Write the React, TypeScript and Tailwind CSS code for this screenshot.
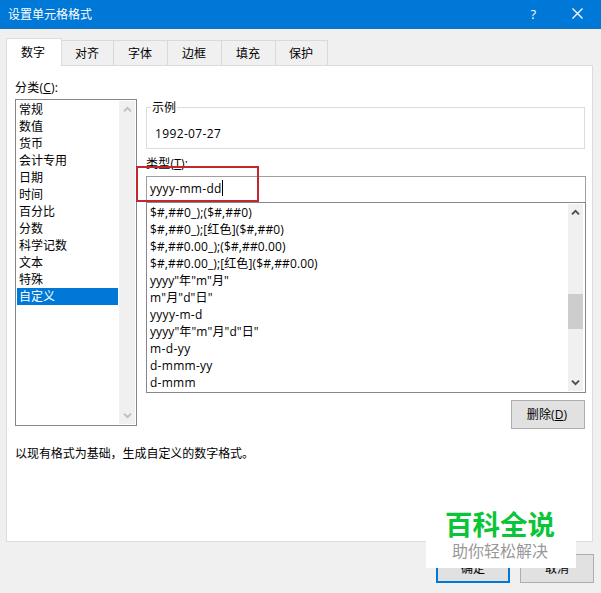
import React, { useState } from 'react';

const tabs = ["数字", "对齐", "字体", "边框", "填充", "保护"];

const categories = [
  "常规",
  "数值",
  "货币",
  "会计专用",
  "日期",
  "时间",
  "百分比",
  "分数",
  "科学记数",
  "文本",
  "特殊",
  "自定义",
];

const formats = [
  { code: '$#,##0_);($#,##0)', spacing: "tracking-[0.16px]" },
  { code: '$#,##0_);[红色]($#,##0)', spacing: "tracking-[0.14px]" },
  { code: '$#,##0.00_);($#,##0.00)', spacing: "tracking-[0.12px]" },
  { code: '$#,##0.00_);[红色]($#,##0.00)', spacing: "tracking-[0.11px]" },
  { code: 'yyyy"年"m"月"', spacing: "tracking-[0.05px]" },
  { code: 'm"月"d"日"', spacing: "tracking-[0.12px]" },
  { code: 'yyyy-m-d', spacing: "tracking-[0.3px]" },
  { code: 'yyyy"年"m"月"d"日"', spacing: "tracking-[0.1px]" },
  { code: 'm-d-yy', spacing: "tracking-[0.4px]" },
  { code: 'd-mmm-yy', spacing: "tracking-[0.28px]" },
  { code: 'd-mmm', spacing: "tracking-[0.25px]" },
];

function Arrow({ down = false, color }: { down?: boolean; color: string }) {
  return (
    <svg width="9" height="7" viewBox="0 0 9 7" className={down ? "rotate-180" : ""}>
      <path d="M1 5.4 L4.5 1.9 L8 5.4" fill="none" stroke={color} strokeWidth="2" />
    </svg>
  );
}

export default function App() {
  const [category, setCategory] = useState("自定义");

  return (
    <div className="relative flex h-[593px] w-[601px] flex-col overflow-hidden bg-[#f0f0f0] font-['Open_Sans','Noto_Sans_CJK_SC',sans-serif] text-[12px] leading-[17px] text-black">
      {/* Title bar */}
      <div className="flex h-[29px] shrink-0 items-center border-b border-[#1a6fb5] bg-[#0078d7] pl-2 text-white">
        <span className="flex-1">设置单元格格式</span>
        <span className="mr-[36px] text-[13px] font-medium">?</span>
        <svg width="11" height="11" viewBox="0 0 11 11" className="mr-[18px] mt-[-2px]">
          <path d="M0.5 0.5 L10.5 10.5 M10.5 0.5 L0.5 10.5" fill="none" stroke="#fff" strokeWidth="1.3" />
        </svg>
      </div>

      {/* Tabs */}
      <div className="z-10 ml-[6px] mt-[9px] flex h-[28px] shrink-0 items-end">
        {tabs.map((tab, i) => (
          <div
            key={tab}
            className={
              i === 0
                ? "flex h-[28px] w-[56px] items-center justify-center border border-b-0 border-[#dcdcdc] bg-white pr-[2px]"
                : `mb-px flex h-[25px] items-center justify-center border-r border-t border-[#d9d9d9] pr-px pt-px ${i === 1 || i === 5 ? "w-[52px]" : "w-[54px]"}`
            }
          >
            {tab}
          </div>
        ))}
      </div>

      {/* Tab page */}
      <div className="-mt-px ml-[6px] flex h-[477px] w-[587px] shrink-0 flex-col border border-[#dcdcdc] bg-white pl-2">
        <div className="flex">
          <div className="w-[122px] pt-[13px]">
            <div className="tracking-[0.2px]">分类(<u>C</u>):</div>
            <div className="mt-[3px] flex h-[327px] border border-[#828790] p-px">
              <div className="w-[101px]">
                {categories.map((name) => (
                  <div
                    key={name}
                    onClick={() => setCategory(name)}
                    className={`h-[17px] pl-[2px] ${name === category ? "bg-[#0078d7] text-white" : ""}`}
                  >
                    {name}
                  </div>
                ))}
              </div>
              <div className="ml-px flex w-[16px] flex-col items-center justify-between bg-[#f0f0f0] py-[5px]">
                <Arrow color="#bfbfbf" />
                <Arrow down color="#bfbfbf" />
              </div>
            </div>
          </div>

          <div className="ml-[9px] w-[440px] pt-[33px]">
            {/* Sample */}
            <fieldset className="h-[50px] w-[439px] border border-[#dcdcdc] pl-2">
              <legend className="-ml-[4px] px-px">示例</legend>
              <div className="mt-[9px] tracking-[0.36px]">1992-07-27</div>
            </fieldset>

            <div className="mt-[6px] tracking-[0.2px]">类型(<u>T</u>):</div>
            <div className="mt-[4px] flex h-[26px] items-center border border-b-0 border-[#a0a0a0] pb-[3px] pl-[3px]">
              <span className="tracking-[0.3px]">yyyy-mm-dd</span>
              <span className="h-[16px] w-px bg-black" />
            </div>
            <div className="flex h-[191px] border border-[#828790] p-px">
              <div className="flex-1 pl-[2px]">
                {formats.map((f) => (
                  <div key={f.code} className={`h-[17px] whitespace-nowrap ${f.spacing}`}>{f.code}</div>
                ))}
              </div>
              <div className="mr-px flex w-[15px] flex-col items-center bg-[#f0f0f0] py-[5px]">
                <Arrow color="#505050" />
                <div className="mt-[78px] h-[35px] w-full bg-[#cdcdcd]" />
                <div className="mt-auto flex"><Arrow down color="#505050" /></div>
              </div>
            </div>
            <button className="ml-[365px] mt-[7px] block h-[29px] w-[74px] border border-[#adadad] bg-[#e1e1e1] pr-[2px] tracking-[0.1px]">
              删除(<u>D</u>)
            </button>
          </div>
        </div>

        <div className="mt-[16px] tracking-[-0.05px]">以现有格式为基础，生成自定义的数字格式。</div>
      </div>

      {/* Dialog buttons */}
      <div className="ml-[436px] mt-[12px] flex gap-[10px]">
        <button className="h-[29px] w-[74px] border-2 border-[#0078d7] bg-[#e1e1e1]">确定</button>
        <button className="h-[29px] w-[74px] border border-[#adadad] bg-[#e1e1e1]">取消</button>
      </div>

      {/* Marker around the format input */}
      <div className="absolute left-[136px] top-[166px] h-[36px] w-[123px] border-2 border-[#c1272d]" />

      {/* Watermark */}
      <div className="absolute left-[426px] top-[500px] flex h-[68px] w-[150px] flex-col items-center bg-white pr-[2px]">
        <div className="mt-[8px] text-[27.5px] font-bold leading-[34px] text-[#0ac537]">百科全说</div>
        <div className="mt-px text-[16px] leading-[17px] text-[#999]">助你轻松解决</div>
      </div>
    </div>
  );
}
